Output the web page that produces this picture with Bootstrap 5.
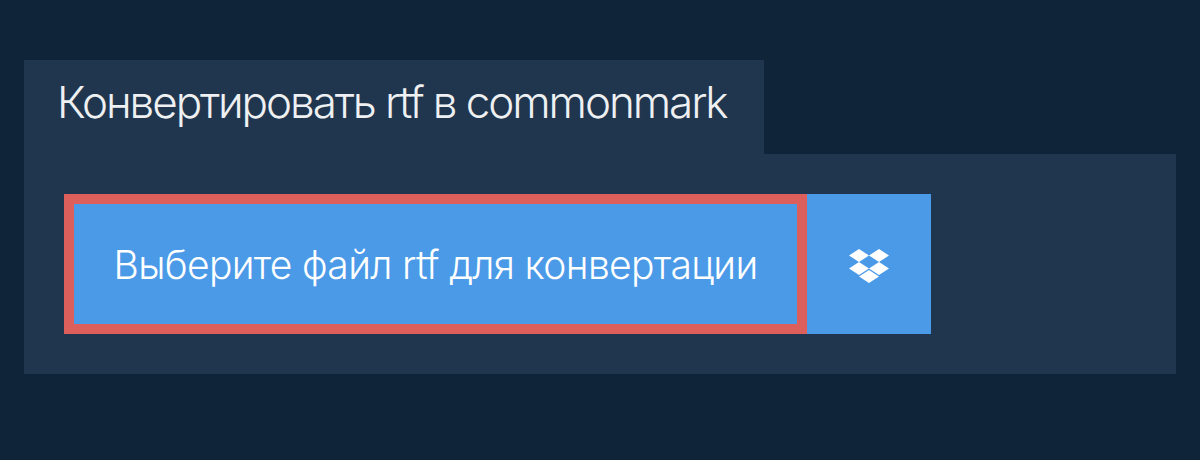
<!DOCTYPE html>
<html lang="ru">
<head>
<meta charset="utf-8">
<title>Конвертировать rtf в commonmark</title>
<link href="https://cdn.jsdelivr.net/npm/bootstrap@5.3.0/dist/css/bootstrap.min.css" rel="stylesheet">
<style>
body { background: #0f2339; font-family: Inter, "Noto Sans", sans-serif; }
.page-wrap { padding: 60px 24px 0; }
.tab-head { background: #20364f; color: #eef0f2; font-size: 44px; font-weight: 300; line-height: 84px; height: 94px; width: 740px; padding: 0 0 0 33px; letter-spacing: -0.047em; margin: 0; }
.panel-body { background: #20364f; padding: 40px; height: 220px; }
.pick-btn { background: #4a9ae8; color: #fff; border: 10px solid #dc5f5c; border-radius: 0; font-size: 39px; font-weight: 300; letter-spacing: -0.017em; height: 140px; width: 743px; padding: 2px 0 0; }
.pick-btn:hover { background: #4a9ae8; color: #fff; border-color: #dc5f5c; }
.drop-btn { background: #4a9ae8; border: 0; border-radius: 0; width: 124px; height: 140px; padding: 4px 0 0; }
.drop-btn:hover { background: #4a9ae8; }
.drop-icon { width: 40px; height: 34px; display: block; }
</style>
</head>
<body>
<main class="page-wrap">
  <div class="d-flex"><h1 class="tab-head">Конвертировать rtf в commonmark</h1></div>
  <section class="panel-body">
    <div class="d-flex">
      <button type="button" class="btn pick-btn">Выберите файл rtf для конвертации</button>
      <button type="button" class="btn drop-btn d-flex align-items-center justify-content-center" aria-label="Dropbox">
        <svg class="drop-icon" viewBox="0 0 40 34" fill="#fff"><path d="M10 0 20 6.5 10 13 0 6.5ZM30 0 40 6.5 30 13 20 6.5ZM10 13 20 19.5 10 26 0 19.5ZM30 13 40 19.5 30 26 20 19.5ZM20 21 30 27.5 20 34 10 27.5Z"/></svg>
      </button>
    </div>
  </section>
</main>
<script src="https://cdn.jsdelivr.net/npm/bootstrap@5.3.0/dist/js/bootstrap.bundle.min.js"></script>
</body>
</html>
